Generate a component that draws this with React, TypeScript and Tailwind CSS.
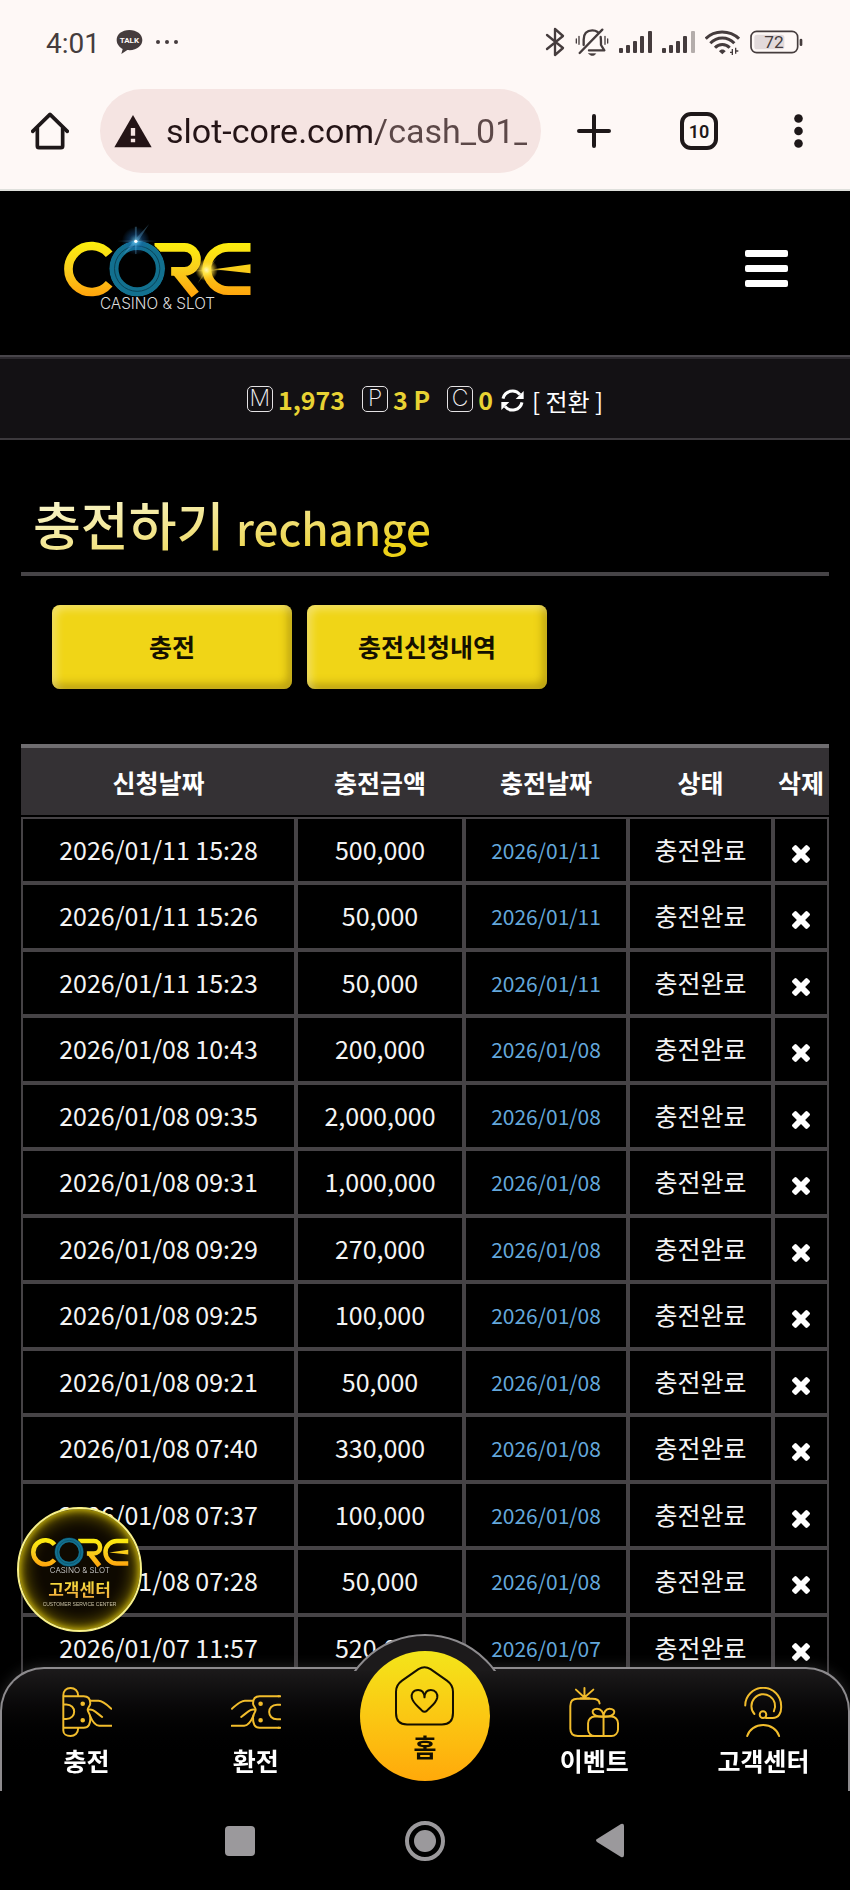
import { useState } from 'react';

type Row = {
  requested: string;
  amount: string;
  charged: string;
};

const initialRows: Row[] = [
  { requested: '2026/01/11 15:28', amount: '500,000', charged: '2026/01/11' },
  { requested: '2026/01/11 15:26', amount: '50,000', charged: '2026/01/11' },
  { requested: '2026/01/11 15:23', amount: '50,000', charged: '2026/01/11' },
  { requested: '2026/01/08 10:43', amount: '200,000', charged: '2026/01/08' },
  { requested: '2026/01/08 09:35', amount: '2,000,000', charged: '2026/01/08' },
  { requested: '2026/01/08 09:31', amount: '1,000,000', charged: '2026/01/08' },
  { requested: '2026/01/08 09:29', amount: '270,000', charged: '2026/01/08' },
  { requested: '2026/01/08 09:25', amount: '100,000', charged: '2026/01/08' },
  { requested: '2026/01/08 09:21', amount: '50,000', charged: '2026/01/08' },
  { requested: '2026/01/08 07:40', amount: '330,000', charged: '2026/01/08' },
  { requested: '2026/01/08 07:37', amount: '100,000', charged: '2026/01/08' },
  { requested: '2026/01/08 07:28', amount: '50,000', charged: '2026/01/08' },
  { requested: '2026/01/07 11:57', amount: '520,000', charged: '2026/01/07' },
];

const StatusBar = () => (
  <div className="flex h-[84px] items-center justify-between pr-[47px] pl-[46px] text-[#453c3d]">
    <div className="flex items-center">
      <span className="pt-[3px] text-[28px] leading-8">4:01</span>
      <svg className="ml-4 h-[26px] w-[27px]" viewBox="0 0 81 78">
        <path d="M40 3C18 3 2 16 2 33c0 11 7 21 18 27l-4 15 18-12c27 3 45-12 45-30C79 16 62 3 40 3Z" fill="#453c3d" />
        <text x="40" y="43" textAnchor="middle" fontSize="24" fontWeight="700" fill="#fef8f7">TALK</text>
      </svg>
      <svg className="ml-3 h-1 w-6" viewBox="0 0 24 4" fill="currentColor">
        <circle cx="3" cy="2" r="2" />
        <circle cx="12" cy="2" r="2" />
        <circle cx="21" cy="2" r="2" />
      </svg>
    </div>
    <div className="flex items-center gap-[10px]">
      <svg className="h-[30px] w-5" viewBox="0 0 60 90" fill="none" stroke="currentColor" strokeWidth="7" strokeLinejoin="round" strokeLinecap="round">
        <path d="M6 24L54 63L30 84V6L54 27L6 66" />
      </svg>
      <svg className="h-[30px] w-[34px]" viewBox="0 0 102 90" fill="none" stroke="currentColor" strokeWidth="7" strokeLinecap="round">
        <path d="M26 54V38c0-18 10-28 26-28 7 0 12 2 16 5M77 30c1 5 1 8 1 24l10 16H42" strokeLinejoin="round" />
        <path d="M14 78L82 8" />
        <path d="M4 36v12M12 28v24M90 28v24M98 36v12" strokeWidth="4" />
        <path d="M42 80h20c-4 7-16 7-20 0Z" fill="currentColor" strokeWidth="2" />
      </svg>
      <Signal faded={false} />
      <Signal faded />
      <svg className="h-[26px] w-[35px]" viewBox="0 0 105 78" fill="none" stroke="currentColor" strokeWidth="9">
        <path d="M2 29C28 2 74 2 102 29" />
        <path d="M16 43C36 22 68 22 88 43" />
        <path d="M30 56C42 43 62 43 74 56" />
        <path d="M42 67L52 76L62 67C57 60 47 60 42 67Z" fill="currentColor" stroke="none" />
        <path d="M75 70h8M82 60v18M92 56v18M90 66h10" strokeWidth="4" />
      </svg>
      <svg className="h-6 w-[53px]" viewBox="0 0 159 72">
        <rect x="3" y="4" width="140" height="64" rx="17" fill="none" stroke="currentColor" strokeWidth="5" />
        <rect x="13" y="14" width="90" height="44" rx="8" fill="#e2dadb" />
        <rect x="149" y="26" width="8" height="22" rx="4" fill="currentColor" />
        <text x="72" y="55" textAnchor="middle" fontSize="52" fontWeight="400" fill="currentColor">72</text>
      </svg>
    </div>
  </div>
);

const Signal = ({ faded }: { faded: boolean }) => (
  <svg className="h-[22px] w-[33px]" viewBox="0 0 33 22" fill="currentColor">
    <rect x="0" y="17" width="4" height="5" rx="1" />
    <rect x="7" y="14" width="4" height="8" rx="1" />
    <rect x="14" y="10" width="4" height="12" rx="1" />
    <rect x="21" y="5" width="4" height="17" rx="1" />
    <rect x="29" y="0" width="4" height="22" rx="1" opacity={faded ? 0.4 : 1} />
  </svg>
);

const BrowserBar = () => (
  <div className="flex items-center border-b-2 border-[#dfe0dc] pt-[5px] pr-[47px] pb-4 pl-[31px] text-[#1e1819]">
    <button type="button" aria-label="홈페이지">
      <svg className="size-[38px]" viewBox="0 0 114 114" fill="none" stroke="currentColor" strokeWidth="11" strokeLinejoin="round" strokeLinecap="round">
        <path d="M5 58L57 7L109 58" />
        <path d="M19 48V102Q19 107 24 107H90Q95 107 95 102V48" />
      </svg>
    </button>
    <div className="ml-[31px] flex h-[84px] min-w-0 flex-1 items-center rounded-full bg-[#f5e4e2] px-[14px]">
      <svg className="h-[34px] w-[38px] shrink-0" viewBox="0 0 114 102">
        <path d="M57 3L113 100H1Z" fill="#241416" />
        <path d="M57 42V65M57 74V85" stroke="#f5e4e2" strokeWidth="13" />
      </svg>
      <input
        type="text"
        aria-label="주소"
        readOnly
        value="slot-core.com/cash_01_"
        className="ml-[14px] w-full min-w-0 bg-linear-to-r from-[#241416] from-57% to-[#5c4848] to-60% bg-clip-text text-[34px] leading-[44px] text-transparent outline-none"
      />
    </div>
    <button type="button" aria-label="새 탭" className="ml-[36px]">
      <svg className="size-[34px]" viewBox="0 0 34 34" stroke="currentColor" strokeWidth="4" strokeLinecap="round">
        <path d="M17 2V32M2 17H32" />
      </svg>
    </button>
    <button type="button" className="ml-[69px] flex size-[38px] items-center justify-center rounded-[11px] border-4 border-[#1e1819] text-[18px] font-semibold">
      10
    </button>
    <button type="button" aria-label="더보기" className="ml-[76px]">
      <svg className="h-[34px] w-[9px]" viewBox="0 0 9 34" fill="currentColor">
        <circle cx="4.5" cy="4.5" r="4.3" />
        <circle cx="4.5" cy="17" r="4.3" />
        <circle cx="4.5" cy="29.5" r="4.3" />
      </svg>
    </button>
  </div>
);

const Logo = ({ id, className, sparkle = true }: { id: string; className: string; sparkle?: boolean }) => (
  <svg className={className} viewBox="185 95 575 285" role="img" aria-label="CORE CASINO & SLOT">
    <defs>
      <linearGradient id={`${id}-gold`} gradientUnits="userSpaceOnUse" x1="0" y1="155" x2="0" y2="320">
        <stop offset="0" stopColor="#fdf00c" />
        <stop offset="0.5" stopColor="#f9cf1c" />
        <stop offset="1" stopColor="#ffa40c" />
      </linearGradient>
      <radialGradient id={`${id}-blue`}>
        <stop offset="0" stopColor="#fff" />
        <stop offset="0.15" stopColor="#5ec4f5" />
        <stop offset="0.5" stopColor="#1a66b0" stopOpacity="0.6" />
        <stop offset="1" stopColor="#1a66b0" stopOpacity="0" />
      </radialGradient>
      <radialGradient id={`${id}-warm`}>
        <stop offset="0" stopColor="#fffde0" />
        <stop offset="0.3" stopColor="#ffe84a" />
        <stop offset="1" stopColor="#ffc81c" stopOpacity="0" />
      </radialGradient>
    </defs>
    <g fill="none" stroke={`url(#${id}-gold)`} strokeWidth="26">
      <path d="M326 195A69 69 0 1 0 326 283" />
      <path d="M462 174H552A36 36 0 0 1 552 246H512" />
      <path d="M528 246L584 316" strokeWidth="28" />
      <path d="M750 174H684A65 65 0 0 0 684 304H750" />
    </g>
    <path d="M640 240L750 225V252Z" fill={`url(#${id}-gold)`} />
    <circle cx="410" cy="238" r="70" fill="none" stroke="#12708f" strokeWidth="28" />
    <circle cx="410" cy="238" r="68" fill="none" stroke="#0a4459" strokeWidth="3" />
    <circle cx="410" cy="238" r="85" fill="none" stroke="#000" strokeWidth="3" />
    {sparkle && (
      <g>
        <circle cx="406" cy="155" r="42" fill={`url(#${id}-blue)`} opacity="0.65" />
        <path d="M446 104L410 160L366 198L402 152ZM350 155L406 153L470 155L406 158ZM403 112L409 112L408 194L404 194Z" fill="#6fc4f4" opacity="0.3" />
        <circle cx="406" cy="156" r="5" fill="#fff" />
        <circle cx="618" cy="242" r="34" fill={`url(#${id}-warm)`} />
        <path d="M648 208L621 246L592 282L615 238ZM574 246L618 240L670 242L618 246Z" fill="#ffe45a" opacity="0.3" />
      </g>
    )}
    <text x="471" y="360" textAnchor="middle" className="fill-[#dcdcdc] font-[Inter] text-[46px] font-light">
      CASINO &amp; SLOT
    </text>
  </svg>
);

const Badge = ({ letter }: { letter: string }) => (
  <span className="flex size-[26px] items-center justify-center rounded-[5px] border border-[#e4e2e4] font-[Inter] text-[23px] leading-none font-extralight text-[#f4f2f4]">
    {letter}
  </span>
);

const SiteHeader = () => (
  <header>
    <div className="flex h-[164px] items-start justify-between pr-[62px] pl-[62px]">
      <a href="#home" className="mt-[30px]">
        <Logo id="top" className="h-[95px] w-[192px]" />
      </a>
      <button type="button" aria-label="메뉴" className="mt-[59px] flex w-[43px] flex-col gap-2">
        <span className="h-[7px] w-full rounded-xs bg-white" />
        <span className="h-[7px] w-full rounded-xs bg-white" />
        <span className="h-[7px] w-full rounded-xs bg-white" />
      </button>
    </div>
    <div className="border-t-2 border-[#48454a]">
      <div className="flex h-[83px] items-center justify-center border-y-2 border-t-[#2c292e] border-b-[#3c393d] bg-[#131114] text-[25px] leading-9 font-bold text-[#e8d233]">
        <Badge letter="M" />
        <span className="ml-[5px]">1,973</span>
        <span className="ml-[17px]"><Badge letter="P" /></span>
        <span className="ml-[5px]">3 P</span>
        <span className="ml-[17px]"><Badge letter="C" /></span>
        <span className="ml-[5px]">0</span>
        <a href="#convert" className="ml-2 flex items-center gap-2 pt-1 text-[24px] font-normal text-white">
          <svg className="size-[23px]" viewBox="0 0 69 69" fill="currentColor">
            <path d="M6 29A29 29 0 0 1 57 17M63 40A29 29 0 0 1 12 52" fill="none" stroke="currentColor" strokeWidth="9" />
            <path d="M68 6V30H44ZM1 63V39H25Z" />
          </svg>
          [ 전환 ]
        </a>
      </div>
    </div>
  </header>
);

const tabClass =
  'h-[84px] w-[240px] rounded-lg bg-[#f0d517] text-[25px] font-bold text-[#141000] shadow-[inset_4px_4px_8px_rgba(255,255,255,0.35),inset_-4px_-5px_8px_rgba(120,95,0,0.45)]';

const HistoryTable = () => {
  const [rows, setRows] = useState<Row[]>(initialRows);

  const removeRow = (requested: string) => {
    setRows(rows.filter((row) => row.requested !== requested));
  };

  return (
    <table className="mt-[55px] w-full table-fixed border-separate border-spacing-0 text-center text-[25px] leading-9 text-[#f4f4f4]">
      <thead>
        <tr className="h-[73px] [&>th]:border-t-4 [&>th]:border-b-2 [&>th]:border-t-[#6f6d70] [&>th]:border-b-black [&>th]:bg-[#343134] [&>th]:p-0 [&>th]:text-white">
          <th>신청날짜</th>
          <th className="w-[168px]">충전금액</th>
          <th className="w-[164px]">충전날짜</th>
          <th className="w-[145px]">상태</th>
          <th className="w-[56px] whitespace-nowrap">삭제</th>
        </tr>
      </thead>
      <tbody>
        {rows.map((row) => (
          <tr
            key={row.requested}
            className="h-[66px] even:h-[67px] [&>td]:border-2 [&>td]:border-[#464346] [&>td]:px-0 [&>td]:pt-0 [&>td]:pb-[3px]"
          >
            <td>{row.requested}</td>
            <td>{row.amount}</td>
            <td>
              <span className="text-[21px] text-[#64a8dc]">{row.charged}</span>
            </td>
            <td>충전완료</td>
            <td>
              <button type="button" aria-label="삭제" className="pt-[2px] align-middle" onClick={() => removeRow(row.requested)}>
                <svg className="size-[18px]" viewBox="302 366 1188 1188" fill="#fff">
                  <path d="M1490 1322q0 40-28 68l-136 136q-28 28-68 28t-68-28l-294-294-294 294q-28 28-68 28t-68-28l-136-136q-28-28-28-68t28-68l294-294-294-294q-28-28-28-68t28-68l136-136q28-28 68-28t68 28l294 294 294-294q28-28 68-28t68 28l136 136q28 28 28 68t-28 68l-294 294 294 294q28 28 28 68z" />
                </svg>
              </button>
            </td>
          </tr>
        ))}
      </tbody>
    </table>
  );
};

// Chip pushed by a hand, shared by the deposit and withdraw icons
const ChipHand = () => (
  <>
    <path d="M6 28H65C79 28 85 37 85 50C85 58 77 62 77 69C77 77 85 80 85 92C86 112 80 124 65 124H6" />
    <path d="M85 42H110C122 42 136 54 149 66M79 69C92 66 98 74 121 91M84 88C91 104 102 118 112 118H150" />
    <circle cx="62" cy="51" r="4" fill="#f2bd2c" />
    <circle cx="62" cy="101" r="4" fill="#f2bd2c" />
  </>
);

const iconProps = {
  className: 'size-[50px]',
  viewBox: '0 0 150 152',
  fill: 'none',
  stroke: '#f2bd2c',
  strokeWidth: 6,
  strokeLinecap: 'round',
} as const;

const DepositIcon = () => (
  <svg {...iconProps}>
    <path d="M3 26V132C3 142 12 149 25 149S48 140 48 126M3 26C3 12 12 3 25 3S48 12 48 26" />
    <path d="M6 53H12C44 53 44 97 12 97H6" />
    <ChipHand />
  </svg>
);

const WithdrawIcon = () => (
  <svg {...iconProps}>
    <g transform="translate(151 0) scale(-1 1)">
      <path d="M2 54H12C44 54 44 98 12 98H2M2 28H8M2 124H8" />
      <ChipHand />
    </g>
  </svg>
);

const EventIcon = () => (
  <svg {...iconProps}>
    <path d="M20 8L46 32M46 3V32M73 8L46 32M34 34H60" />
    <path d="M92 50C91 41 84 36 70 36H24C9 36 3 44 3 58V127C3 142 10 149 26 149H74" />
    <rect x="57" y="90" width="91" height="59" rx="20" />
    <path d="M104 90V149M104 90C64 92 64 66 84 66C97 66 104 78 104 90C104 78 111 66 122 66C144 66 144 92 104 90" />
  </svg>
);

const ServiceIcon = () => (
  <svg {...iconProps}>
    <path d="M21 56A54 53 0 0 1 130 56C132 80 122 94 104 94H84" />
    <path d="M49 82A36 36 0 1 1 108 74" />
    <circle cx="75" cy="84" r="10" />
    <path d="M27 149A50 44 0 0 1 124 149" />
  </svg>
);

const HomeIcon = () => (
  <svg className="h-[60px] w-[59px]" viewBox="0 0 176 178" fill="none" stroke="#140f00" strokeWidth="6" strokeLinejoin="round">
    <path d="M70 9Q88 -2 106 9L155 43Q173 56 173 76V140Q173 174 140 174H36Q3 174 3 140V76Q3 56 21 43Z" />
    <path d="M88 93C87 77 79 71 69 71C53 71 48 84 50 94C54 112 70 120 80 132Q88 140 96 132C106 120 122 112 126 94C128 82 121 71 107 71C97 71 89 77 88 93Z" />
  </svg>
);

const itemClass = 'flex flex-col items-center gap-[5px] pt-[18px]';

const BottomNav = () => (
  <nav className="relative grid grid-cols-5 rounded-t-[44px] border-2 border-b-0 border-[#8d8b8e] bg-linear-to-b from-[#1c1a1b] to-black to-80% text-[25px] leading-9 font-bold text-white shadow-[0_0_14px_rgba(90,90,90,0.4)]">
    {/* raised rim behind the home button */}
    <span className="absolute -top-[35px] left-1/2 h-[37px] w-[174px] -translate-x-1/2 overflow-hidden">
      <span className="block size-[174px] rounded-full border-2 border-[#8d8b8e] bg-[#1c1a1b]" />
    </span>
    <a href="#deposit" className={itemClass}>
      <DepositIcon />
      충전
    </a>
    <a href="#withdraw" className={itemClass}>
      <WithdrawIcon />
      환전
    </a>
    <div className="relative flex h-[122px] justify-center">
      <a href="#home" className="-mt-[18px] flex size-[130px] shrink-0 flex-col items-center gap-[2px] rounded-full bg-linear-to-b from-[#f3e51a] to-[#ffa90a] pt-[15px] text-[#140f00]">
        <HomeIcon />
        홈
      </a>
    </div>
    <a href="#event" className={itemClass}>
      <EventIcon />
      이벤트
    </a>
    <a href="#service" className={itemClass}>
      <ServiceIcon />
      고객센터
    </a>
  </nav>
);

const SystemNav = () => (
  <div className="relative flex h-[99px] items-center justify-center gap-[145px] bg-black">
    <button type="button" aria-label="최근 앱" className="flex w-10 justify-center">
      <span className="size-[30px] rounded-sm bg-[#9b999c]" />
    </button>
    <button type="button" aria-label="홈 화면" className="flex size-10 items-center justify-center rounded-full border-4 border-[#9b999c]">
      <span className="size-[22px] rounded-full bg-[#9b999c]" />
    </button>
    <button type="button" aria-label="뒤로" className="flex w-10 justify-center">
      <svg className="h-[35px] w-7" viewBox="0 0 28 35" fill="#9b999c">
        <path d="M25 1Q28 0 28 3V32Q28 35 25 34L1 19Q-1 17 1 16Z" />
      </svg>
    </button>
  </div>
);

const App = () => {
  return (
    <div className="min-h-screen bg-black font-['Noto_Sans_CJK_KR',sans-serif]">
      <div className="bg-[#fef8f6] font-[Roboto,sans-serif]">
        <StatusBar />
        <BrowserBar />
      </div>
      <SiteHeader />
      <main className="px-[21px] pb-[130px]">
        <div className="mt-[46px] border-b-4 border-[#464447] px-3 pb-[7px]">
          <h1 className="w-fit bg-linear-to-br from-[#fbfbe0] to-[#ecd118] to-80% bg-clip-text text-[52px] leading-[76px] font-medium text-transparent">
            충전하기 <small className="text-[44px] font-medium">rechange</small>
          </h1>
        </div>
        <div className="mt-[29px] flex gap-[15px] pl-[31px]">
          <button type="button" className={tabClass}>충전</button>
          <button type="button" className={tabClass}>충전신청내역</button>
        </div>
        <HistoryTable />
      </main>

      <div className="fixed inset-x-0 bottom-0">
        <BottomNav />
        <SystemNav />
      </div>

      <a
        href="#service"
        className="fixed bottom-[258px] left-[17px] flex size-[125px] flex-col items-center rounded-full border-2 border-[#f8f18a] bg-[#0e0900] pt-[18px] shadow-[inset_0_0_20px_#c4aa00,inset_0_0_7px_#f0e020]"
      >
        <Logo id="float" className="h-[50px] w-[100px]" sparkle={false} />
        <span className="bg-linear-to-b from-[#f5ee3c] to-[#f0a03c] bg-clip-text text-[17px] leading-6 font-bold text-transparent">고객센터</span>
        <span className="font-['Liberation_Sans'] text-[5px] leading-[7px] text-[#c9c2a4]">CUSTOMER SERVICE CENTER</span>
      </a>
    </div>
  );
};

export default App;
